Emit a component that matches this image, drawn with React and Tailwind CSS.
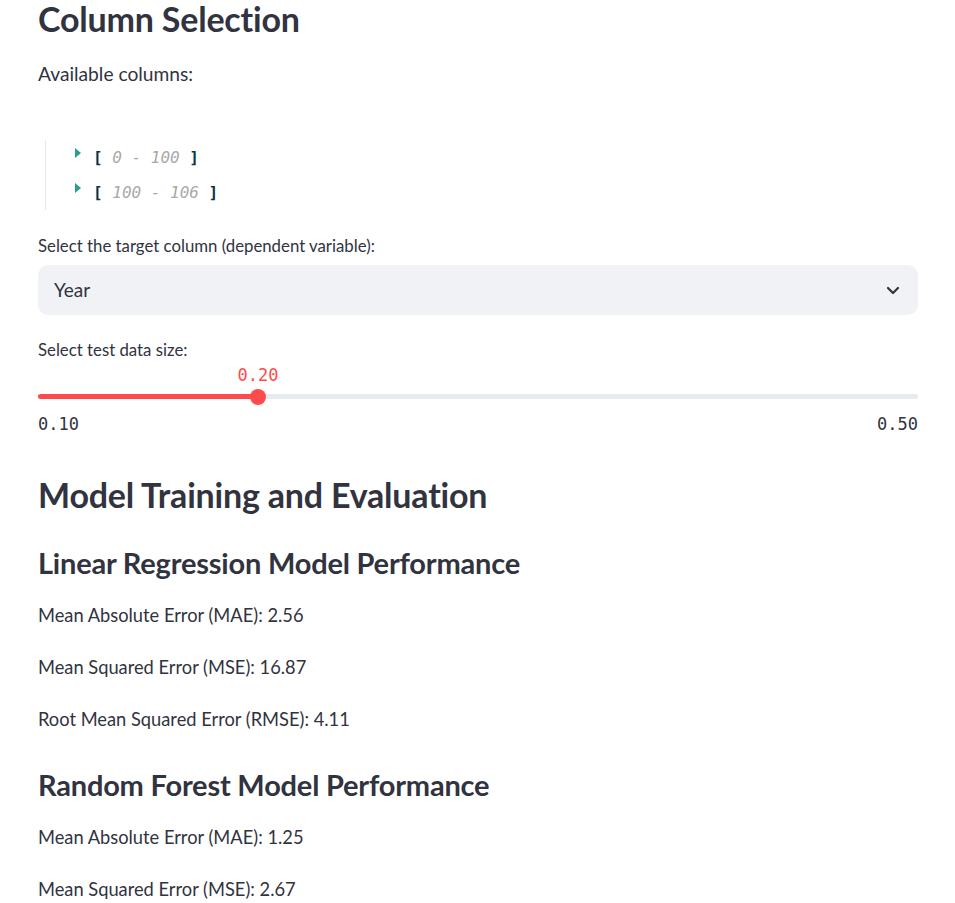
import React from 'react';

const sans = { fontFamily: 'Lato, "Noto Sans", sans-serif' };

// Small disclosure triangle used by the json viewer
function Caret() {
  return (
    <svg width="8" height="11" viewBox="0 0 8 11" className="mr-[11px] -mt-[8px]">
      <polygon points="1,0 7,5 1,10" fill="#2a9d8f" />
    </svg>
  );
}

function JsonRow({ from, to }) {
  return (
    <div className="flex h-[35px] items-center whitespace-pre pl-[28px] font-['DejaVu_Sans_Mono',monospace] text-[16px]">
      <Caret />
      <span className="font-bold text-[#073642]">[ </span>
      <span className="italic text-[#a8a8a8]">{from} - {to}</span>
      <span className="font-bold text-[#073642]"> ]</span>
    </div>
  );
}

function Metric({ children, mt }) {
  return (
    <p className={`${mt} flex h-[30px] items-center text-[18.3px]`}>{children}</p>
  );
}

export default function App() {
  return (
    <div className="min-h-screen bg-white text-[#31333f]" style={sans}>
      <div className="w-[880px] ml-[38px]">
        <h2 className="flex h-[36px] items-center pt-[2px] text-[34px] leading-none font-bold tracking-[-0.2px]">
          Column Selection
        </h2>
        <p className="mt-[23px] flex h-[30px] items-center text-[19.2px]">Available columns:</p>

        <div className="mt-[51px] ml-[7px] border-l border-[#e8e8e8]">
          <JsonRow from="0" to="100" />
          <JsonRow from="100" to="106" />
        </div>

        <label className="mt-[24px] flex h-[24px] items-center text-[16.8px]">
          Select the target column (dependent variable):
        </label>
        <div className="mt-[7px] flex h-[50px] items-center justify-between rounded-[10px] bg-[#f0f2f6] pl-[16px] pr-[18px]">
          <span className="text-[19px]">Year</span>
          <svg width="14" height="9" viewBox="0 0 14 9">
            <polyline points="2,2 7,7 12,2" fill="none" stroke="#31333f" strokeWidth="2.2" strokeLinecap="round" strokeLinejoin="round" />
          </svg>
        </div>

        <label className="mt-[23px] flex h-[24px] items-center text-[16.8px]">Select test data size:</label>

        <div className="relative h-[78px] font-['DejaVu_Sans_Mono',monospace]">
          <span className="absolute left-[25%] top-[4px] flex h-[20px] -translate-x-1/2 items-center text-[17px] text-[#ff4b4b]">
            0.20
          </span>
          <div className="absolute left-0 right-0 top-[32px] h-[5px] rounded-full bg-[#e6eaf1]">
            <div className="h-full w-[25%] rounded-full bg-[#ff4b4b]" />
            <div className="absolute left-[25%] top-1/2 h-[16px] w-[16px] -translate-x-1/2 -translate-y-1/2 rounded-full bg-[#ff4b4b]" />
          </div>
          <div className="absolute left-0 right-0 top-[53px] flex h-[20px] items-center justify-between text-[17px]">
            <span>0.10</span>
            <span>0.50</span>
          </div>
        </div>

        <h2 className="mt-[32px] flex h-[44px] items-center text-[34px] font-bold tracking-[-0.2px]">
          Model Training and Evaluation
        </h2>
        <h3 className="mt-[29px] flex h-[36px] items-center text-[29px] font-bold tracking-[-0.2px]">
          Linear Regression Model Performance
        </h3>
        <Metric mt="mt-[20px]">Mean Absolute Error (MAE): 2.56</Metric>
        <Metric mt="mt-[22px]">Mean Squared Error (MSE): 16.87</Metric>
        <Metric mt="mt-[22px]">Root Mean Squared Error (RMSE): 4.11</Metric>

        <h3 className="mt-[32px] flex h-[36px] items-center text-[29px] font-bold tracking-[-0.2px]">
          Random Forest Model Performance
        </h3>
        <Metric mt="mt-[20px]">Mean Absolute Error (MAE): 1.25</Metric>
        <Metric mt="mt-[22px]">Mean Squared Error (MSE): 2.67</Metric>
      </div>
    </div>
  );
}
